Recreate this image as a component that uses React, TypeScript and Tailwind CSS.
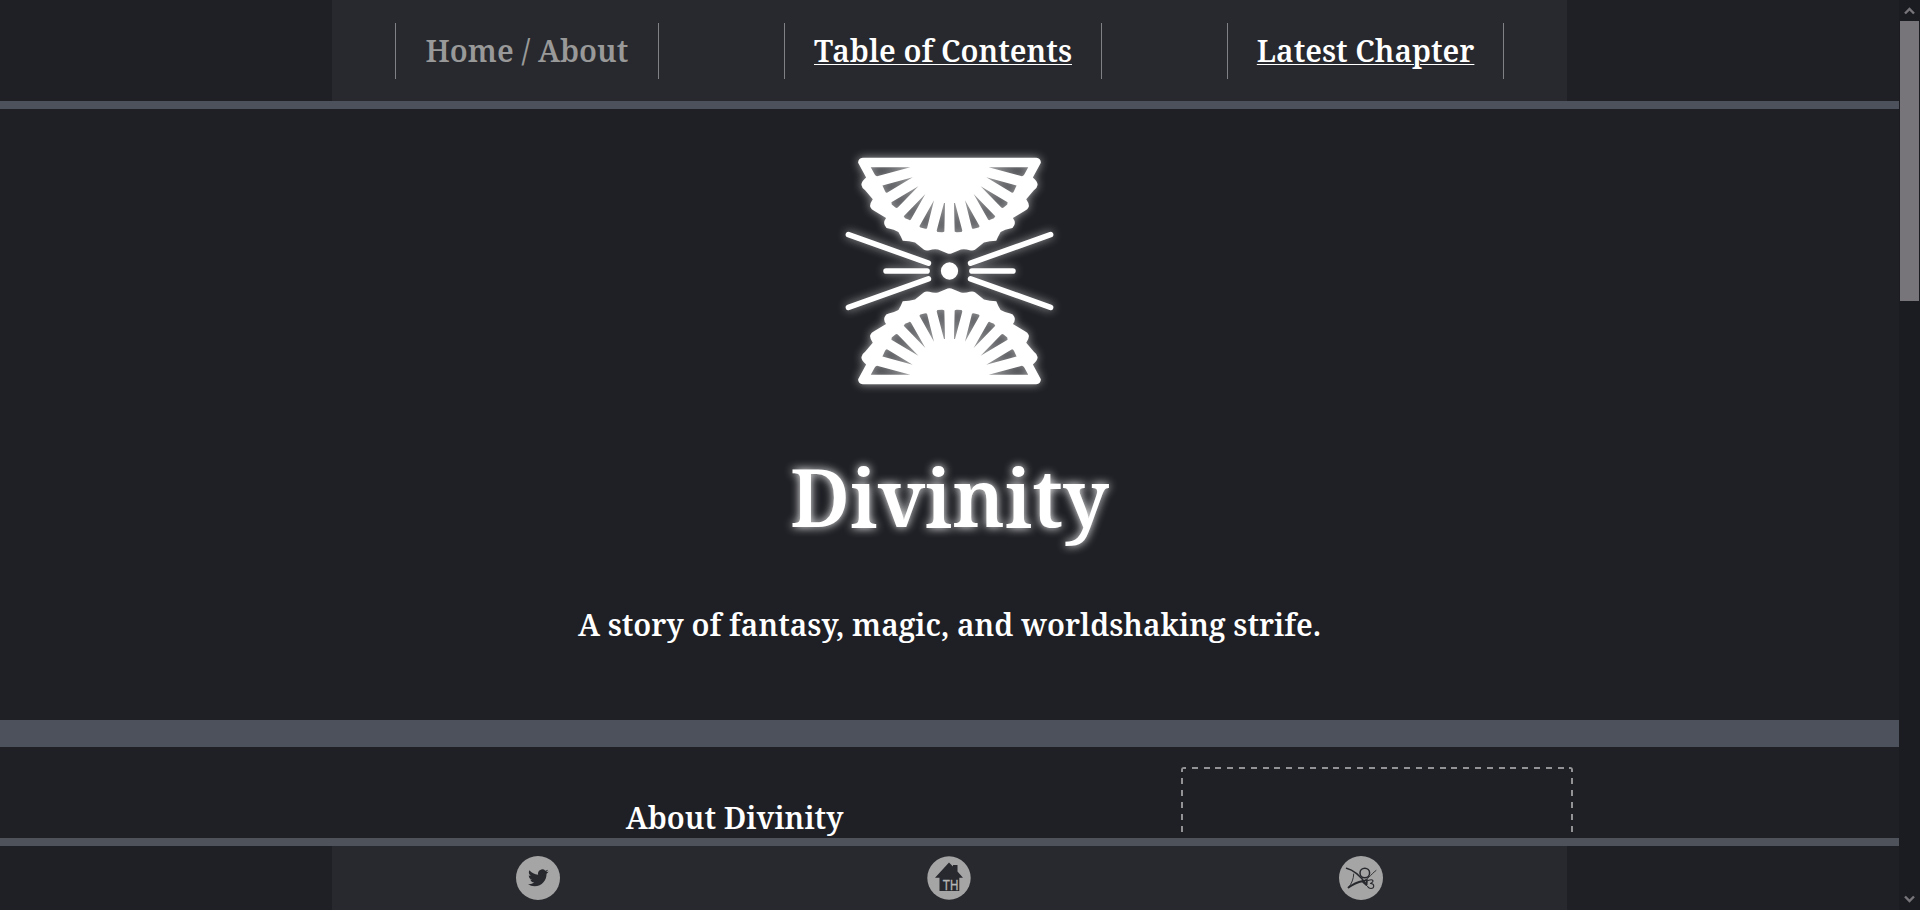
import React from "react";

const serif = "font-['Noto_Serif','DejaVu_Serif_Condensed','DejaVu_Serif',serif] font-[590]";

function Fan() {
  return (
    <path
      fillRule="evenodd"
      d="M98 53 H619 Q633 54 633 68 L609 113 Q624 126 623 135 Q622 144 612 151 L589 178 Q600 194 596 202 Q594 208 584 213 L549 234 Q558 246 553 256 Q550 265 541 266 Q526 268 512 276 Q504 290 499 303 Q479 303 462 308 L435 330 Q428 334 419 331 Q406 327 393 329 L364 341 Q358 343 353 341 L324 329 Q311 327 298 331 Q289 334 282 330 L255 308 Q238 303 218 303 Q213 290 205 276 Q191 268 176 266 Q167 265 164 256 Q159 246 168 234 L133 213 Q123 208 121 202 Q117 194 128 178 L105 151 Q95 144 94 135 Q93 126 108 113 L84 68 Q84 54 98 53 Z
      M122 82 L241 82 L141 109 Q137 109 134 104 Z
      M157 137 L248 112 L172 158 Q168 160 165 154 Z
      M184 187 L265 139 L203 203 Q199 206 195 202 L185 194 Z
      M221 229 L286 162 L243 238 Q240 243 235 239 L225 235 Z
      M268 259 L312 181 L291 265 Q289 268 283 266 L271 263 Z
      M320 272 L342 189 H345 L343 275 Q340 278 335 277 L322 276 Z
      M595 82 L476 82 L576 109 Q580 109 583 104 Z
      M560 137 L469 112 L545 158 Q549 160 552 154 Z
      M533 187 L452 139 L514 203 Q518 206 522 202 L532 194 Z
      M496 229 L431 162 L474 238 Q477 243 482 239 L492 235 Z
      M449 259 L405 181 L426 265 Q428 268 434 266 L446 263 Z
      M397 272 L375 189 H372 L374 275 Q377 278 382 277 L395 276 Z"
    />
  );
}

function Emblem() {
  return (
    <svg
      viewBox="0 0 717 787"
      className="h-[262px] w-[239px] overflow-visible fill-white [filter:drop-shadow(0_0_5px_rgba(255,255,255,0.6))]"
    >
      <Fan />
      <g transform="matrix(1 0 0 -1 0 787)">
        <Fan />
      </g>
      <circle cx="358.5" cy="393.5" r="26" />
      <path
        d="M55 284 L295 370 M55 503 L295 417 M168 393.5 H291 M662 284 L422 370 M662 503 L422 417 M549 393.5 H426"
        stroke="white"
        strokeWidth="17"
        strokeLinecap="round"
      />
    </svg>
  );
}

function NavItem({ children, current, width }: { children: React.ReactNode; current?: boolean; width: string }) {
  return (
    <div className="flex h-14 items-center border-x border-[#808184] px-[30px]">
      <a
        className={`flex justify-center whitespace-nowrap text-[30px] leading-[56px] ${width} ${
          current ? "text-[#999999]" : "text-white underline decoration-1 underline-offset-[2px]"
        }`}
      >
        {children}
      </a>
    </div>
  );
}

function Twitter() {
  return (
    <svg viewBox="0 0 44 44" className="size-11">
      <circle cx="22" cy="22" r="22" fill="#a5a5a5" />
      <path
        transform="translate(12 11.5) scale(.86)"
        fill="#28292e"
        d="M23.953 4.57a10 10 0 01-2.825.775 4.958 4.958 0 002.163-2.723c-.951.555-2.005.959-3.127 1.184a4.92 4.92 0 00-8.384 4.482C7.69 8.095 4.067 6.13 1.64 3.162a4.822 4.822 0 00-.666 2.475c0 1.71.87 3.213 2.188 4.096a4.904 4.904 0 01-2.228-.616v.06a4.923 4.923 0 003.946 4.827 4.996 4.996 0 01-2.212.085 4.936 4.936 0 004.604 3.417 9.867 9.867 0 01-6.102 2.105c-.39 0-.779-.023-1.17-.067a13.995 13.995 0 007.557 2.209c9.053 0 13.998-7.496 13.998-13.985 0-.21 0-.42-.015-.63A9.935 9.935 0 0024 4.59z"
      />
    </svg>
  );
}

function House() {
  return (
    <svg viewBox="0 0 44 44" className="size-11">
      <circle cx="22" cy="22" r="21.7" fill="#a5a5a5" />
      <path d="M22 6.5 L26 10.5 V9 H30.5 V15.5 L36 21.7 H32.3 V35 H12.5 V21.7 H8 Z" fill="#28292e" />
      <text
        x="15.8"
        y="34"
        textLength="15.6"
        lengthAdjust="spacingAndGlyphs"
        fontSize="14"
        fontWeight="400"
        fill="#b5b5b5"
        stroke="#b5b5b5"
        strokeWidth=".3"
        fontFamily="Liberation Sans"
      >
        TH
      </text>
    </svg>
  );
}

function Figure() {
  return (
    <svg viewBox="0 0 44 44" className="size-11" fill="none" stroke="#28292e" strokeLinecap="round" strokeLinejoin="round">
      <circle cx="22" cy="22" r="22" fill="#a5a5a5" stroke="none" />
      <circle cx="25.8" cy="17" r="4.8" strokeWidth="1.5" />
      <path d="M7.5 12.3 C15 14 22 21 27.5 28.5" strokeWidth="1.4" />
      <path d="M37 14.5 C31 19 29 24 24 25" strokeWidth=".9" />
      <path d="M9.5 31.5 C13 27 14.5 23 14.7 18" strokeWidth=".9" />
      <path d="M9.5 31.5 C14 28 19 26 24 25 L28 24 L27.5 29 L23 25" strokeWidth="1.8" />
      <path d="M29 24.5 C34 22.5 36 25 31.5 27.5 C36 27.5 35.5 32.5 32 32.5 Q30 32.5 28.5 30.5" strokeWidth="1.1" />
    </svg>
  );
}

function Scrollbar() {
  return (
    <div className="flex h-full w-[21px] flex-col items-center bg-[#1b1c21]">
      <svg viewBox="0 0 19 21" className="h-[21px] w-[19px]" fill="none" stroke="#77757a" strokeWidth="2.4">
        <path d="M5 13.5 L9.5 9 L14 13.5" />
      </svg>
      <div className="h-[280px] w-[19px] bg-[#77757a]" />
      <svg viewBox="0 0 19 21" className="mt-auto h-[21px] w-[19px]" fill="none" stroke="#77757a" strokeWidth="2.4">
        <path d="M5 7.5 L9.5 12 L14 7.5" />
      </svg>
    </div>
  );
}

export default function App() {
  return (
    <div className={`flex h-[910px] w-full overflow-hidden bg-[#1f2025] text-white ${serif}`}>
      <div className="flex h-full min-w-0 flex-1 flex-col">
        <header className="flex h-[109px] shrink-0 justify-center border-b-8 border-[#4d515b]">
          <nav className="flex h-full w-[65%] items-center justify-around bg-[#28292e]">
            <NavItem current width="w-[202px]">Home / About</NavItem>
            <NavItem width="w-[256px]">Table of Contents</NavItem>
            <NavItem width="w-[215px]">Latest Chapter</NavItem>
          </nav>
        </header>

        <main className="flex min-h-0 flex-1 flex-col overflow-hidden">
          <section className="flex h-[638px] shrink-0 flex-col items-center border-b-[27px] border-[#4d515b] pt-[31px]">
            <Emblem />
            <h1 className="mt-[34px] whitespace-nowrap text-[80px] leading-[120px] [text-shadow:0_0_10px_white]">
              Divinity
            </h1>
            <p className="mt-[48px] whitespace-nowrap text-[30px] leading-[41px]">
              A story of fantasy, magic, and worldshaking strife.
            </p>
          </section>
          <section className="flex gap-[54px] pl-[342px] pt-5">
            <h2 className="w-[785px] pt-[30px] text-center text-[30px] leading-[41px]">
              About Divinity
            </h2>
            <div className="flex h-40 w-[392px] flex-col overflow-hidden rounded-[3px]">
              <div className="h-0.5 shrink-0 bg-[repeating-linear-gradient(90deg,#939395_0_6px,transparent_6px_11.8px)] bg-[position:-1px_0]" />
              <div className="flex flex-1 justify-between">
                <div className="w-0.5 bg-[repeating-linear-gradient(180deg,#939395_0_3px,transparent_3px_9px,#939395_9px_12px)]" />
                <div className="w-0.5 bg-[repeating-linear-gradient(180deg,#939395_0_3px,transparent_3px_9px,#939395_9px_12px)]" />
              </div>
            </div>
          </section>
        </main>

        <footer className="flex h-[72px] shrink-0 justify-center border-t-8 border-[#4d525b]">
          <div className="grid w-[65%] grid-cols-3 items-center justify-items-center bg-[#28292e]">
            <Twitter />
            <House />
            <Figure />
          </div>
        </footer>
      </div>
      <Scrollbar />
    </div>
  );
}
